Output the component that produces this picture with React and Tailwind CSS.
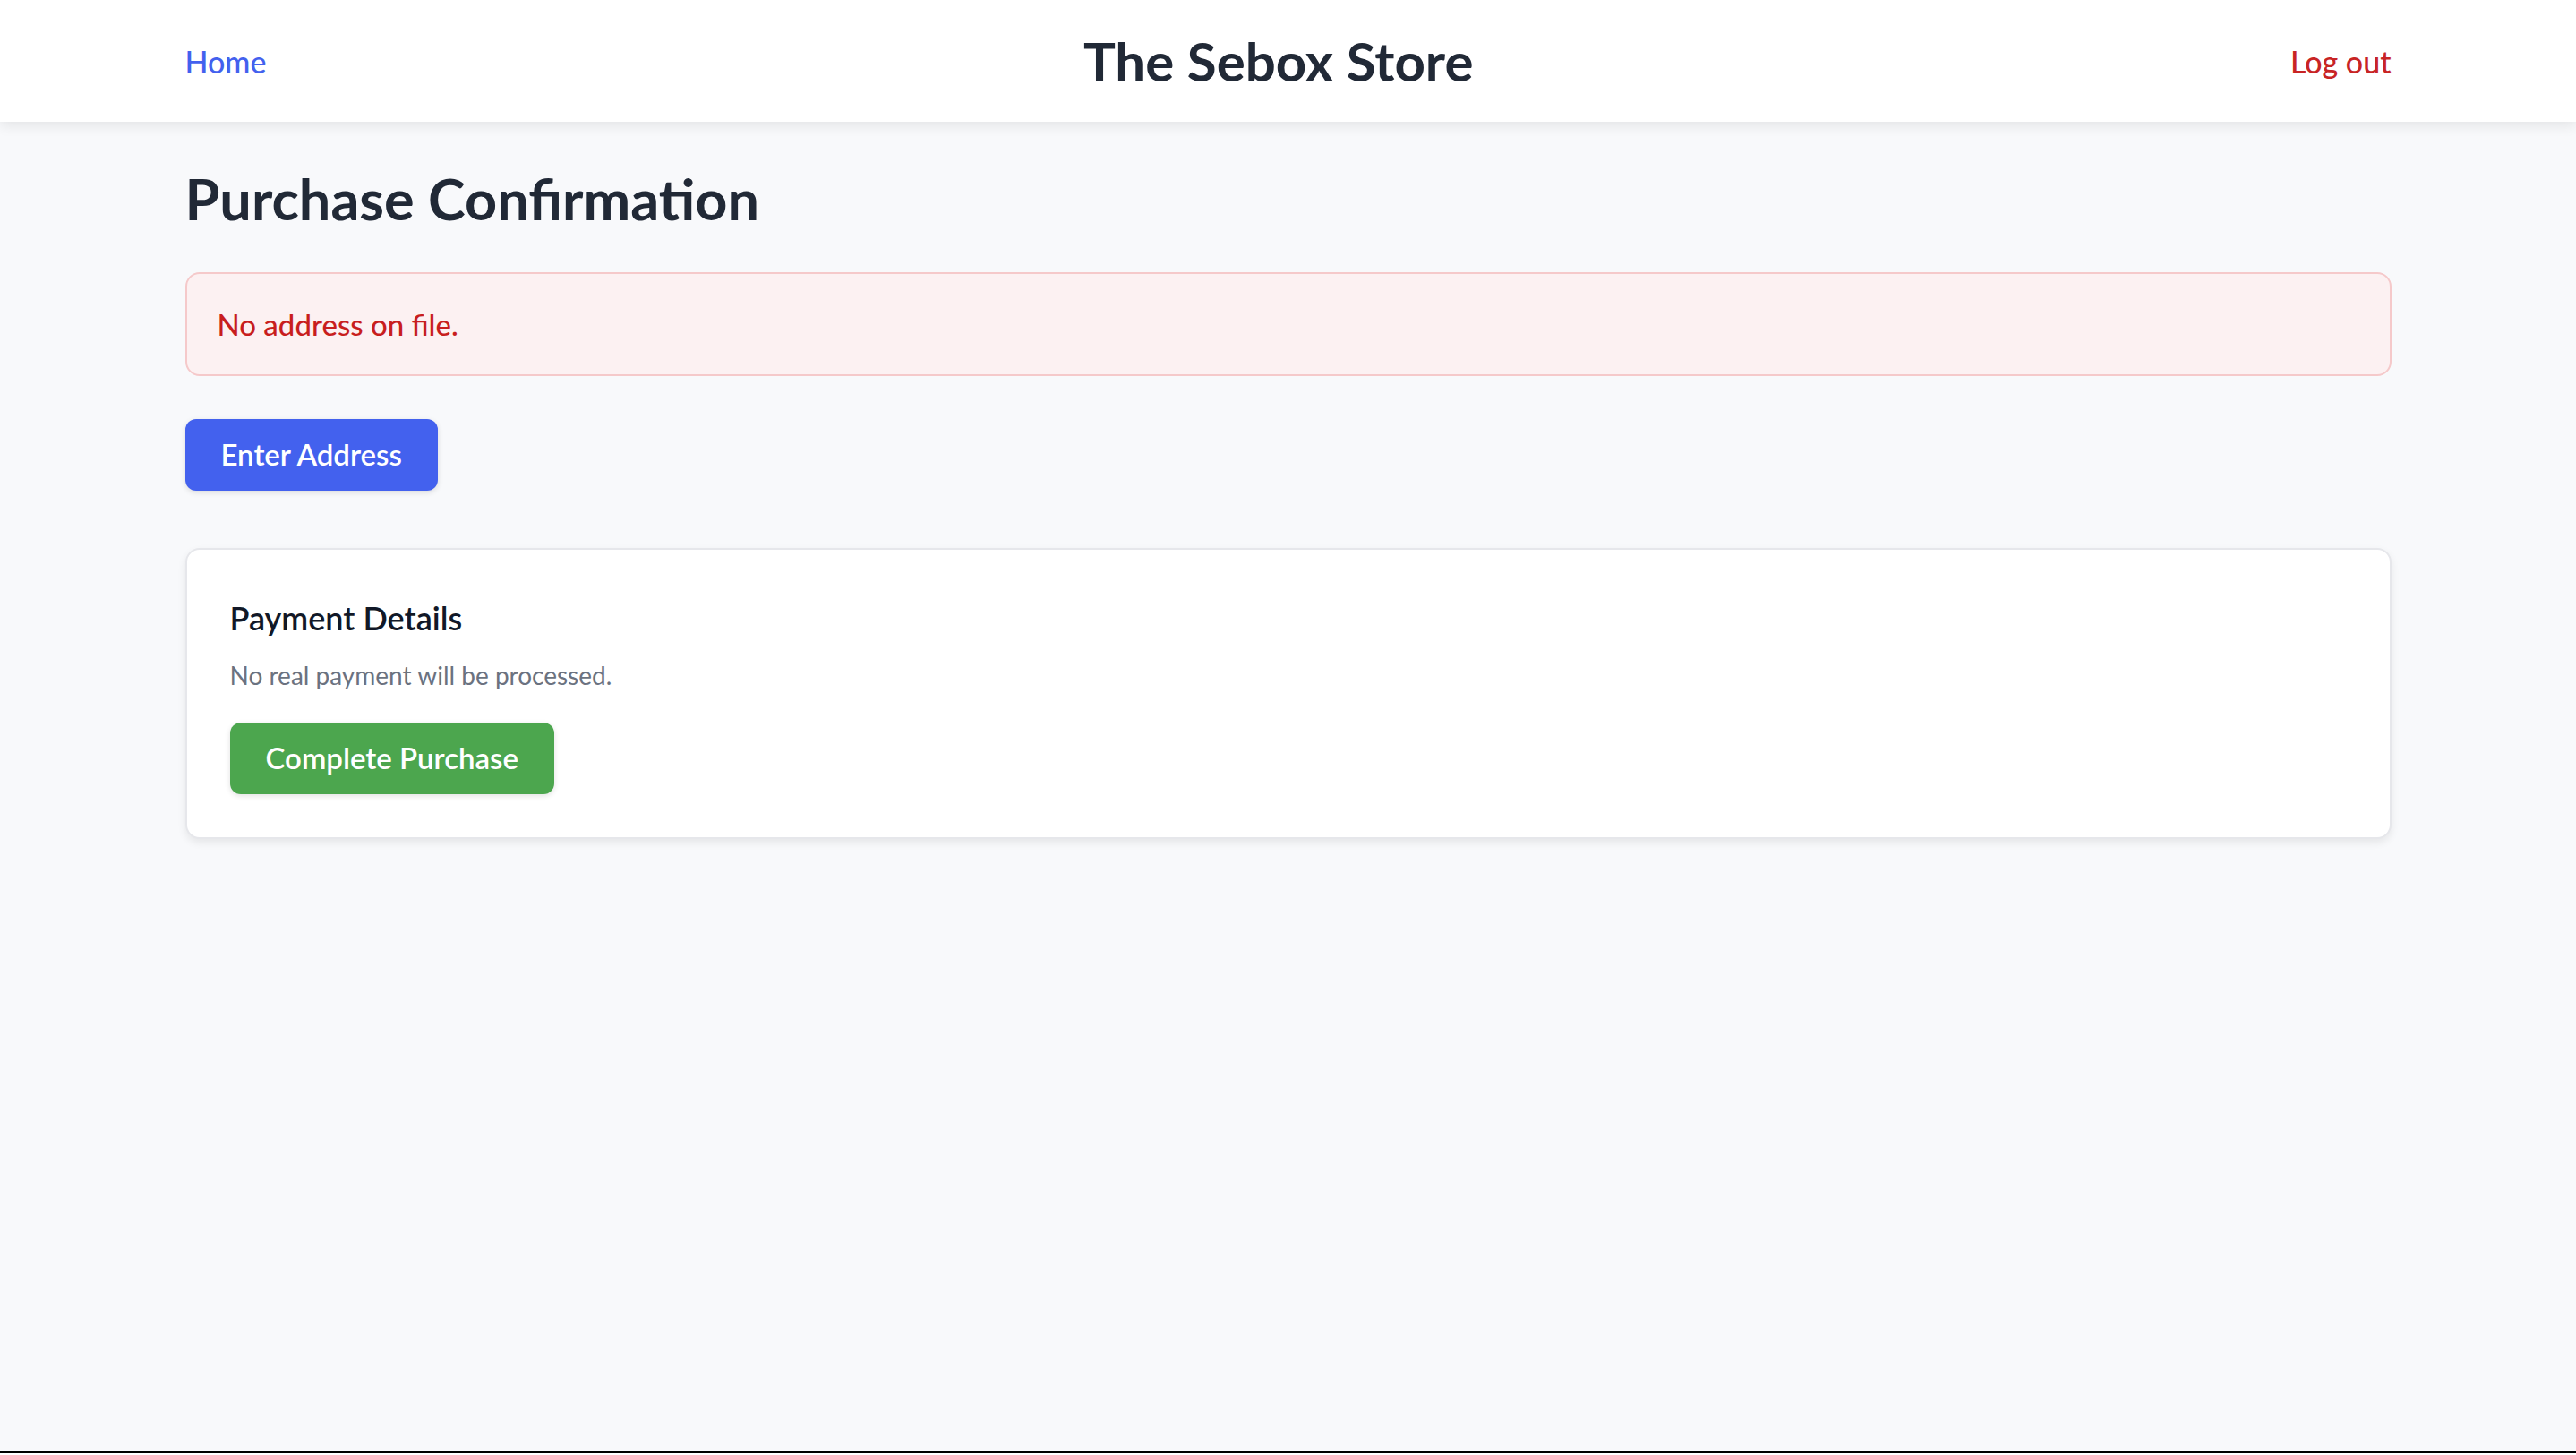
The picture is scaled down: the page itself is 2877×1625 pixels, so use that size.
export default function App() {
  return (
    <div className="min-h-[1623px] border-b-2 border-black bg-[#f8f9fb] font-['Lato',_sans-serif]">
      {/* Top bar */}
      <header className="bg-white shadow-[0_4px_14px_rgba(0,0,0,0.09)]">
        <div className="max-w-[2560px] mx-auto px-[48px] h-[136px] flex items-center justify-between">
          <a href="#" className="text-[34px] font-medium text-[#4361ee]">Home</a>
          <h1 className="text-[60px] leading-[72px] font-bold text-[#212936]">The Sebox Store</h1>
          <a href="#" className="text-[34px] font-medium text-[#c82424]">Log out</a>
        </div>
      </header>

      <main className="max-w-[2560px] mx-auto px-[48px] pt-[50px]">
        <h2 className="text-[63px] leading-[72px] font-bold text-[#212936] mb-[46px]">Purchase Confirmation</h2>

        <div className="bg-[#fcf1f2] border-2 border-[#f5c9ca] rounded-[16px] px-[34px] py-[32px] text-[33px] leading-[48px] font-medium text-[#c81e1e]">
          No address on file.
        </div>

        <button className="mt-[48px] h-[80px] px-[40px] rounded-[12px] bg-[#4361ee] text-white text-[33px] font-semibold shadow-[0_2px_6px_rgba(0,0,0,0.12)]">
          Enter Address
        </button>

        <section className="mt-[64px] bg-white border-2 border-[#e6e7eb] rounded-[16px] p-[48px] shadow-[0_4px_10px_rgba(0,0,0,0.08)]">
          <h3 className="text-[36px] leading-[56px] font-semibold text-[#111827]">Payment Details</h3>
          <p className="mt-[16px] text-[28px] leading-[40px] text-[#6b7280]">No real payment will be processed.</p>
          <button className="mt-[33px] h-[80px] px-[40px] rounded-[12px] bg-[#4ca64e] text-white text-[33px] font-semibold shadow-[0_2px_6px_rgba(0,0,0,0.12)]">
            Complete Purchase
          </button>
        </section>
      </main>
    </div>
  );
}
